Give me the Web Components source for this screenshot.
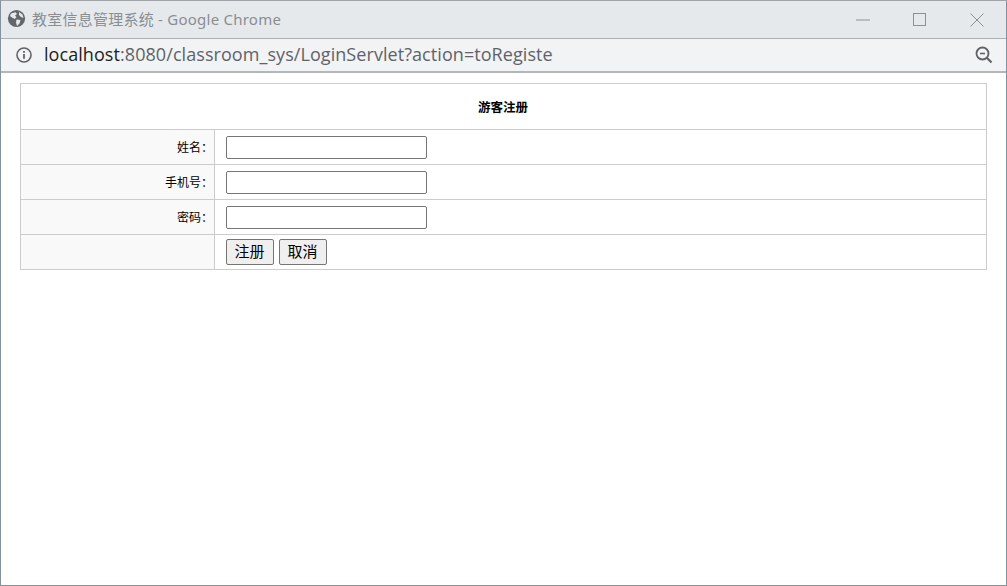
<!DOCTYPE html>
<html lang="zh"><head><meta charset="utf-8"><title>教室信息管理系统</title>
<style>
html,body{margin:0;padding:0;height:100%;background:#fff}
body{font-family:"Liberation Sans","Noto Sans CJK SC",sans-serif}
</style></head><body>
<browser-window>
  <title-bar>教室信息管理系统 - Google Chrome</title-bar>
  <address-bar></address-bar>
  <register-form></register-form>
</browser-window>
<script>
function def(name, html){
  customElements.define(name, class extends HTMLElement{
    constructor(){super();this.attachShadow({mode:'open'}).innerHTML=html;}
  });
}
def('browser-window',`<style>:host{display:flex;flex-direction:column;box-sizing:border-box;width:1007px;height:586px;overflow:hidden;border:1px solid #84929f;border-top-color:#a0a4a8;background:#fff}</style><slot></slot>`);
def('title-bar',`<style>
:host{display:flex;align-items:center;box-sizing:border-box;height:38px;background:#e6e9ec;border-bottom:1px solid #aeb1b4;padding-left:5.5px;flex:none}
svg{display:block;flex:none}
.g{margin-bottom:2px}
.t{margin-left:6.5px;font:15px "Noto Sans","Noto Sans CJK SC",sans-serif;color:#8a8e92;letter-spacing:.24px;white-space:nowrap;flex:1;padding-bottom:2px}
.b{height:37px;display:flex;align-items:center;justify-content:center;flex:none}
</style>
<svg class="g" width="19" height="19" viewBox="0 0 19 19"><circle cx="9.5" cy="9.5" r="8.6" fill="#63676b"/><path d="M4 4.5 8.5 3.2 10 5 8 6.8 9.5 8 7.8 10 5 8.6 3 7ZM9.5 10.5 13.5 11 12.5 14.5 10 17 9 13.5ZM12 3 15.5 5.5 16.5 9 14 8 12 6Z" fill="#e6e9ec"/></svg>
<span class="t"><slot></slot></span>
<span class="b" style="width:56px"><svg width="14" height="2" viewBox="0 0 14 2"><path d="M0 1H14" stroke="#8d9195" stroke-width="1"/></svg></span>
<span class="b" style="width:57px"><svg width="13" height="13" viewBox="0 0 13 13"><rect x=".5" y=".5" width="12" height="12" fill="none" stroke="#8d9195"/></svg></span>
<span class="b" style="width:58px"><svg width="14" height="14" viewBox="0 0 14 14"><path d="M.5.5 13.5 13.5M13.5.5.5 13.5" stroke="#8d9195" fill="none"/></svg></span>`);
def('address-bar',`<style>
:host{display:flex;align-items:center;box-sizing:border-box;height:34px;background:#f1f3f5;border-bottom:2px solid #b4b7ba;padding:0 13px 0 15px;flex:none}
svg{display:block;flex:none}
.u{margin-left:12px;font:18px "Open Sans","Noto Sans",sans-serif;letter-spacing:.065px;color:#5f6368;white-space:nowrap;flex:1;padding-bottom:3px}
.u b{font-weight:400;color:#1c1e20}
</style>
<svg width="16" height="16" viewBox="0 0 16 16"><circle cx="8" cy="8" r="7" fill="none" stroke="#5f6368" stroke-width="1.6"/><path d="M8 7V11.8" stroke="#5f6368" stroke-width="1.8"/><path d="M8 4V5.8" stroke="#5f6368" stroke-width="1.8"/></svg>
<span class="u"><b>localhost</b>:8080/classroom_sys/LoginServlet?action=toRegiste</span>
<svg width="18" height="18" viewBox="0 0 18 18"><circle cx="7.5" cy="7.5" r="6" fill="none" stroke="#5f6368" stroke-width="1.8"/><path d="M5 7.5H10" stroke="#5f6368" stroke-width="1.6"/><path d="M11.8 11.8 16.5 16.5" stroke="#5f6368" stroke-width="2.2"/></svg>`);
def('register-form',`<style>
:host{display:block;padding:10px 19px 0;font-family:"Liberation Sans","Noto Sans CJK SC",sans-serif;font-size:12px;color:#000}
table{border-collapse:collapse;width:967px;table-layout:fixed}
td,th{border:1px solid #ccc;padding:0;box-sizing:border-box}
th{height:46px;font-size:12.5px;font-weight:700;text-align:center;padding:0 1px 1px 0}
td{height:35px}
td.l{background:#f9f9f9;text-align:right;padding:0 1px 2px 0}
td.f{padding-left:11px}
input{display:block;box-sizing:border-box;width:201px;height:23px;margin:0;padding:1px 2px;border:1px solid #767676;border-radius:2px;background:#fff}
.row{display:flex;gap:5px}
button{box-sizing:border-box;width:48px;height:26px;padding:0 1px 3px 0;margin:0;font:15px "Liberation Sans","Noto Sans CJK SC",sans-serif;color:#000;background:#efefef;border:1px solid #767676;border-radius:2px}
</style>
<table>
<colgroup><col style="width:194px"><col></colgroup>
<tr><th colspan="2">游客注册</th></tr>
<tr><td class="l">姓名：</td><td class="f"><input type="text"></td></tr>
<tr><td class="l">手机号：</td><td class="f"><input type="text"></td></tr>
<tr><td class="l">密码：</td><td class="f"><input type="password"></td></tr>
<tr><td class="l"></td><td class="f"><div class="row"><button>注册</button><button>取消</button></div></td></tr>
</table>`);
</script>
</body></html>
